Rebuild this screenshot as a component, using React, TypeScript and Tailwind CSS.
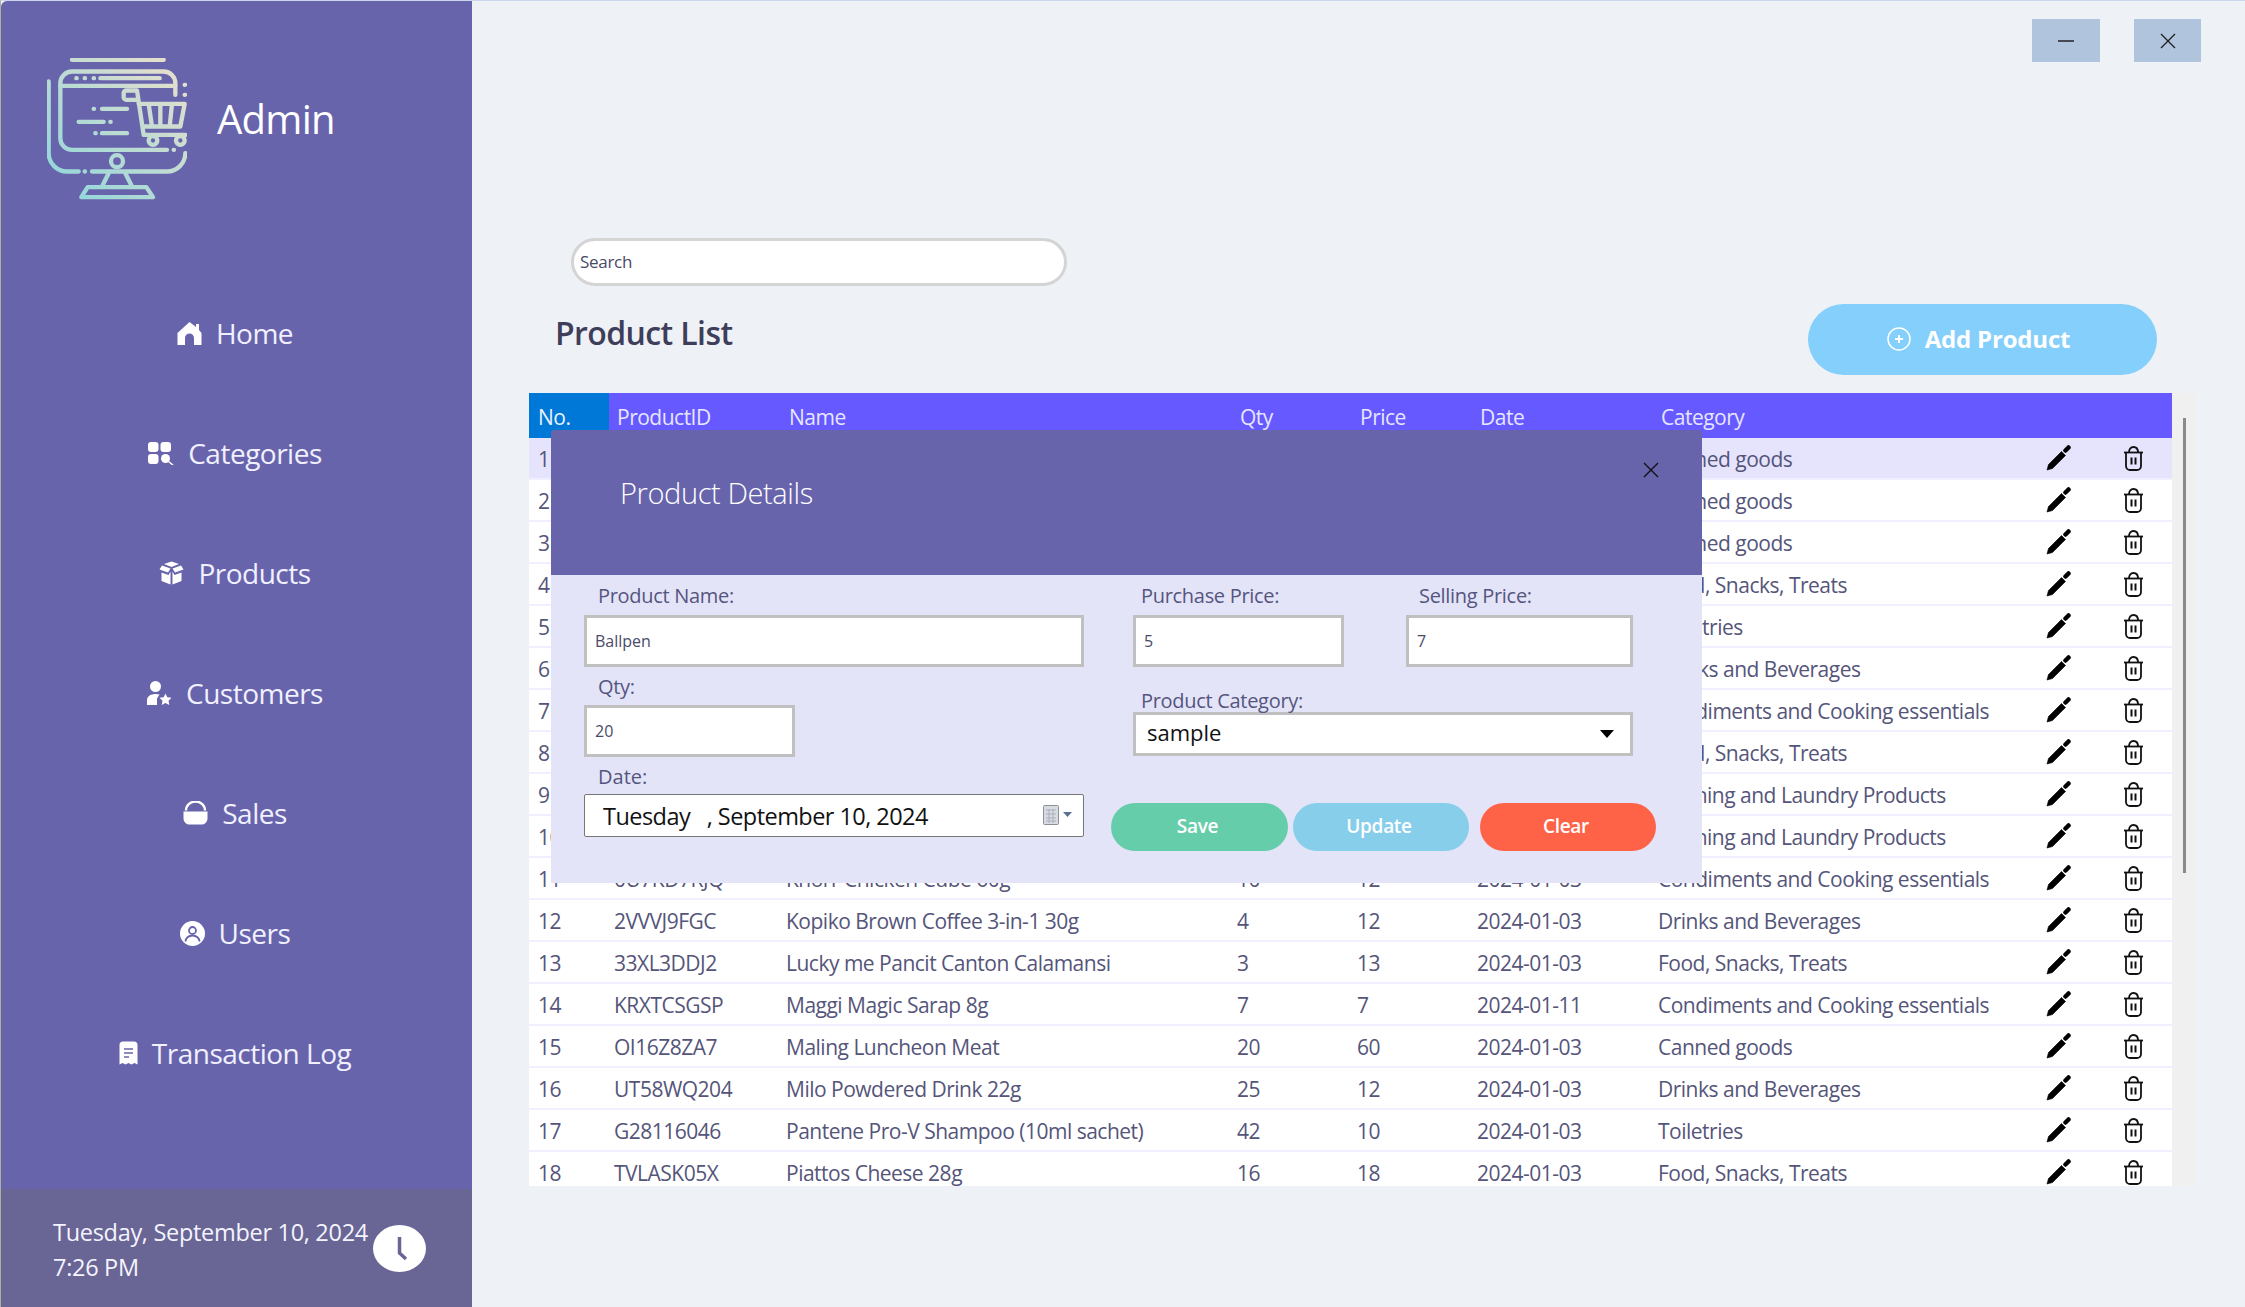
import React from "react";

const font = "font-['Open_Sans','Noto_Sans',sans-serif]";

type Row = {
  no: number;
  id?: string;
  name?: string;
  qty?: number;
  price?: number;
  date?: string;
  category: string;
};

const rows: Row[] = [
  { no: 1, category: "Canned goods" },
  { no: 2, category: "Canned goods" },
  { no: 3, category: "Canned goods" },
  { no: 4, category: "Food, Snacks, Treats" },
  { no: 5, category: "Toiletries" },
  { no: 6, category: "Drinks and Beverages" },
  { no: 7, category: "Condiments and Cooking essentials" },
  { no: 8, category: "Food, Snacks, Treats" },
  { no: 9, category: "Clothing and Laundry Products" },
  { no: 10, category: "Clothing and Laundry Products" },
  { no: 11, id: "0U7KD7RJQ", name: "Knorr Chicken Cube 60g", qty: 10, price: 12, date: "2024-01-03", category: "Condiments and Cooking essentials" },
  { no: 12, id: "2VVVJ9FGC", name: "Kopiko Brown Coffee 3-in-1 30g", qty: 4, price: 12, date: "2024-01-03", category: "Drinks and Beverages" },
  { no: 13, id: "33XL3DDJ2", name: "Lucky me Pancit Canton Calamansi", qty: 3, price: 13, date: "2024-01-03", category: "Food, Snacks, Treats" },
  { no: 14, id: "KRXTCSGSP", name: "Maggi Magic Sarap 8g", qty: 7, price: 7, date: "2024-01-11", category: "Condiments and Cooking essentials" },
  { no: 15, id: "OI16Z8ZA7", name: "Maling Luncheon Meat", qty: 20, price: 60, date: "2024-01-03", category: "Canned goods" },
  { no: 16, id: "UT58WQ204", name: "Milo Powdered Drink 22g", qty: 25, price: 12, date: "2024-01-03", category: "Drinks and Beverages" },
  { no: 17, id: "G28116046", name: "Pantene Pro-V Shampoo (10ml sachet)", qty: 42, price: 10, date: "2024-01-03", category: "Toiletries" },
  { no: 18, id: "TVLASK05X", name: "Piattos Cheese 28g", qty: 16, price: 18, date: "2024-01-03", category: "Food, Snacks, Treats" },
];

const Logo = () => (
  <svg width="140" height="142" viewBox="0 0 420 425" fill="none" stroke="url(#logoGrad)" strokeWidth="13" strokeLinecap="round" strokeLinejoin="round">
    <defs>
      <linearGradient id="logoGrad" gradientUnits="userSpaceOnUse" x1="0" y1="425" x2="420" y2="0">
        <stop offset="0" stopColor="#8AD6DC" />
        <stop offset="1" stopColor="#EDE0CB" />
      </linearGradient>
    </defs>
    <path d="M75 5H350" />
    <path d="M385 110V75a35 35 0 0 0-35-35H75a35 35 0 0 0-35 35V240a35 35 0 0 0 35 35H360" />
    <path d="M380 275h1M40 83H385" />
    <path d="M88 60h1M113 60h1M140 60h1M160 60H338" />
    <path d="M5 70V285a55 55 0 0 0 55 55H95M113 340h1M135 340H360a55 55 0 0 0 55-55" />
    <path d="M413 80h1M413 110h1" />
    <circle cx="210" cy="309" r="18" />
    <path d="M185 345L165 385M235 345L255 385M122 387H298L318 417H103Z" />
    <path d="M140 152h1M165 152H240M95 191H170M190 191h1M145 225h1M165 225H240" />
    <path d="M238 97H270L290 230H415M270 125H238a8 8 0 0 1-8-8V105a8 8 0 0 1 8-8" />
    <path d="M275 137H413L400 205H288M305 137L315 205M340 137V205M375 137L368 205" />
    <circle cx="318" cy="247" r="13" />
    <circle cx="400" cy="247" r="13" />
  </svg>
);

const HomeIcon = () => (
  <svg width="25" height="25" viewBox="0 0 25 25" fill="#fff">
    <path d="M12.500 1L19 6V3h3v6l2.500 3v12H17v-7a4.500 4.500 0 0 0-9 0v7H0.500V12Z" />
  </svg>
);

const CategoriesIcon = () => (
  <svg width="26" height="24" viewBox="0 0 26 24" fill="#fff">
    <rect x="0" y="1" width="10.500" height="10" rx="3" />
    <rect x="12.500" y="1" width="10.500" height="10" rx="3" />
    <rect x="0" y="13" width="10.500" height="10" rx="3" />
    <circle cx="17.500" cy="17.500" r="4.500" />
    <path d="M20.500 20.500L25 24" stroke="#fff" strokeWidth="1.500" />
  </svg>
);

const ProductsIcon = () => (
  <svg width="25" height="24" viewBox="0 0 25 24" fill="#fff">
    <path d="M12.500 0.500L20 3l-7.500 3L5 3Z" />
    <path d="M3 4.500l8.500 3L9 11.500 0.500 8.500Z" />
    <path d="M22 4.500l-8.500 3L16 11.500l8.500-3Z" />
    <path d="M2.500 11.500L9.500 14l2-3.500V23.500L2.500 20Z" />
    <path d="M22.500 11.500L15.500 14l-2-3.500V23.500L22.500 20Z" />
  </svg>
);

const CustomersIcon = () => (
  <svg width="25" height="24" viewBox="0 0 25 24" fill="#fff">
    <circle cx="8.500" cy="5.500" r="5.500" />
    <path d="M0 24v-4.500C0 15 4 13 9 13c1.500 0 2.500.2 3.500.5L10 17.500V24Z" />
    <path d="M18.500 12.500l1.800 3.800 4.200.5-3 2.900.8 4.300-3.800-2.100-3.800 2.100.8-4.300-3-2.900 4.200-.5Z" />
  </svg>
);

const SalesIcon = () => (
  <svg width="25" height="24" viewBox="0 0 25 24" fill="#fff">
    <path d="M0.500 10.500h24v7.500a6 6 0 0 1-6 5.500h-12a6 6 0 0 1-6-5.500Z" />
    <path d="M3 9.500a9.500 9 0 0 1 19 0" fill="none" stroke="#fff" strokeWidth="2.400" />
  </svg>
);

const UsersIcon = () => (
  <svg width="25" height="25" viewBox="0 0 25 25">
    <circle cx="12.500" cy="12.500" r="12.500" fill="#fff" />
    <circle cx="12.500" cy="9.500" r="3.500" fill="none" stroke="#6864AC" strokeWidth="1.800" />
    <path d="M5.500 20.500a7 6 0 0 1 14 0" fill="none" stroke="#6864AC" strokeWidth="1.800" />
  </svg>
);

const LogIcon = () => (
  <svg width="19" height="24" viewBox="0 0 19 24">
    <path d="M0.500 4a3.500 3.500 0 0 1 3.500-3.500h11A3.500 3.500 0 0 1 18.500 4v19.500l-3-1.500-3 1.500-3-1.500-3 1.500-3-1.500-3 1.500Z" fill="#fff" />
    <path d="M5 8h9M5 12h9M5 16h5" stroke="#6864AC" strokeWidth="1.600" />
  </svg>
);

const PencilIcon = () => (
  <svg width="25" height="26" viewBox="0 0 25 26" fill="none">
    <path d="M1 25L2.500 19.500L15.500 6.500L19.500 10.500L6.500 23.500Z" fill="#000" stroke="#000" strokeWidth="0.600" strokeLinejoin="round" />
    <path d="M19.500 5.500L22.500 2.500" stroke="#000" strokeWidth="4.500" strokeLinecap="round" />
  </svg>
);

const TrashIcon = () => (
  <svg width="21" height="25" viewBox="0 0 21 25" fill="none" stroke="#111" strokeWidth="1.800" strokeLinejoin="round">
    <path d="M1 6.500h19" />
    <path d="M6 6.500C6 3 7.500 1 10.500 1S15 3 15 6.500" />
    <path d="M3 6.500V20a4 4 0 0 0 4 4h7a4 4 0 0 0 4-4V6.500" />
    <path d="M8.500 11.500v7M12.500 11.500v7" strokeWidth="2" />
  </svg>
);

const navItems: { label: string; icon: React.ReactNode }[] = [
  { label: "Home", icon: <HomeIcon /> },
  { label: "Categories", icon: <CategoriesIcon /> },
  { label: "Products", icon: <ProductsIcon /> },
  { label: "Customers", icon: <CustomersIcon /> },
  { label: "Sales", icon: <SalesIcon /> },
  { label: "Users", icon: <UsersIcon /> },
  { label: "Transaction Log", icon: <LogIcon /> },
];

const Sidebar = () => (
  <aside className="w-[471px] h-full shrink-0 bg-[#6864AC] rounded-tl-md flex flex-col">
    <div className="h-[272px] pl-[46px] pt-[57px] flex items-start gap-[30px]">
      <Logo />
      <span className="text-[40px] leading-[50px] mt-[36px] text-white tracking-[-0.7px]">Admin</span>
    </div>
    <nav className="flex-1 flex flex-col pr-[3px]">
      {navItems.map((item) => (
        <div key={item.label} className="h-[120px] flex items-center justify-center gap-[14px] text-[28px] text-[#F0F0FF] tracking-[-0.5px]">
          {item.icon}
          <span>{item.label}</span>
        </div>
      ))}
    </nav>
    <div className="h-[118px] shrink-0 bg-[#696594] pl-[52px] pt-[4px] flex items-center">
      <div className="w-[320px] text-[23.500px] leading-[35px] font-medium text-[#F4F4FF] tracking-[-0.3px] whitespace-nowrap">
        <div>Tuesday, September 10, 2024</div>
        <div>7:26 PM</div>
      </div>
      <svg className="-mt-[4px]" width="53" height="47" viewBox="0 0 53 47">
        <ellipse cx="26.500" cy="23.500" rx="26.500" ry="23.500" fill="#fff" />
        <path d="M26.500 12V28L33 34" fill="none" stroke="#696594" strokeWidth="3.500" />
      </svg>
    </div>
  </aside>
);

const Field = ({ label, value, className, labelClass }: { label: string; value: string; className: string; labelClass: string }) => (
  <div className={className}>
    <div className={`h-[40px] text-[20px] leading-[40px] text-[#55557F] tracking-[-0.3px] whitespace-nowrap ${labelClass}`}>{label}</div>
    <div className="h-[52px] border-[3px] border-[#C0C0C0] bg-white pl-[8px] flex items-center text-[16px] text-[#4a4a68]">{value}</div>
  </div>
);

const Modal = () => (
  <div className="absolute left-[550px] top-[429px] w-[1151px] h-[453px] flex flex-col">
    <div className="h-[145px] shrink-0 bg-[#6864AC] rounded-t-[3px] relative pl-[69px] pt-[41px]">
      <span className="text-[29px] leading-[44px] font-light text-white tracking-[-0.4px]">Product Details</span>
      <svg className="absolute left-[1092px] top-[32px]" width="16" height="16" viewBox="0 0 16 16" stroke="#111" strokeWidth="1.400">
        <path d="M1 1L15 15M15 1L1 15" />
      </svg>
    </div>
    <div className="flex-1 bg-[#E4E4F8] pl-[33px] flex">
      <div className="w-[500px] flex flex-col">
        <Field label="Product Name:" value="Ballpen" className="w-[500px]" labelClass="pl-[14px] leading-[42px]" />
        <Field label="Qty:" value="20" className="w-[211px] mt-[-2px]" labelClass="pl-[14px] leading-[44px]" />
        <div className="h-[37px] pl-[14px] text-[20px] leading-[40px] text-[#55557F]">Date:</div>
        <div className="h-[43px] border border-[#777] rounded-[2px] bg-white pl-[18px] pr-[10px] flex items-center justify-between text-[23.500px] text-[#111] tracking-[-0.55px] whitespace-pre">
          <span className="pt-[2px]">{"Tuesday   , September 10, 2024"}</span>
          <svg width="30" height="22" viewBox="0 0 30 22">
            <rect x="0.500" y="0.500" width="15" height="19" rx="1" fill="#D8DCE2" stroke="#8a8f98" />
            <path d="M3 5h10M3 9h10M3 13h10M3 16h10M6 4v14M10 4v14" stroke="#A8B0BC" strokeWidth="1" />
            <path d="M20 7h9l-4.500 5Z" fill="#5B6F8F" />
          </svg>
        </div>
      </div>
      <div className="ml-[49px] w-[523px] flex flex-col">
        <div className="flex">
          <Field label="Purchase Price:" value="5" className="w-[211px] mr-[62px]" labelClass="pl-[8px] leading-[42px]" />
          <Field label="Selling Price:" value="7" className="w-[227px]" labelClass="pl-[13px] leading-[42px]" />
        </div>
        <div className="w-[500px] mt-[24px]">
          <div className="h-[21px] pl-[8px] text-[20px] leading-[19px] text-[#55557F] tracking-[-0.3px]">Product Category:</div>
          <div className="h-[44px] border-[3px] border-[#C0C0C0] bg-white pl-[11px] pr-[16px] flex items-center justify-between text-[22px] text-[#111]">
            <span className="-mt-[4px]">sample</span>
            <svg width="14" height="8" viewBox="0 0 14 8"><path d="M0 0H14L7 8Z" fill="#000" /></svg>
          </div>
        </div>
        <div className="flex mt-[47px] -ml-[22px] text-[19px] font-semibold text-white tracking-[-0.3px]">
          <div className="w-[177px] h-[48px] pr-[4px] pb-[2px] rounded-[24px] bg-[#66CDAA] flex items-center justify-center">Save</div>
          <div className="ml-[5px] w-[176px] h-[48px] pr-[4px] pb-[2px] rounded-[24px] bg-[#87CEEB] flex items-center justify-center">Update</div>
          <div className="ml-[11px] w-[176px] h-[48px] pr-[4px] pb-[2px] rounded-[24px] bg-[#FF6347] flex items-center justify-center">Clear</div>
        </div>
      </div>
    </div>
  </div>
);

const ProductTable = () => (
  <div className="flex h-[793px] mt-[18px]">
    <div className="w-[1643px] h-full flex flex-col overflow-hidden bg-white text-[21px] tracking-[-0.5px]">
      <div className="h-[45px] shrink-0 bg-[#6559FF] text-[#E6E6FF] grid grid-cols-[80px_172px_451px_120px_120px_181px_1fr] items-center pt-[4px]">
        <div className="bg-[#0078D7] h-[45px] -mt-[4px] pl-[9px] pt-[4px] flex items-center text-[#EAF2FF]">No.</div>
        <div className="pl-[8px]">ProductID</div>
        <div className="pl-[8px]">Name</div>
        <div className="pl-[8px]">Qty</div>
        <div className="pl-[8px]">Price</div>
        <div className="pl-[8px]">Date</div>
        <div className="pl-[8px]">Category</div>
      </div>
      {rows.map((r) => (
        <div
          key={r.no}
          className={
            "h-[42px] shrink-0 border-b-2 border-[#F0EEFF] text-[#55557A] grid grid-cols-[85px_172px_451px_120px_120px_181px_370px_60px_84px] items-center " +
            (r.no === 1 ? "bg-[#E6E4FD]" : "bg-white")
          }
        >
          <div className="pl-[9px] pt-[3px]">{r.no}</div>
          <div className="pt-[3px]">{r.id}</div>
          <div className="pt-[3px] whitespace-nowrap">{r.name}</div>
          <div className="pt-[3px]">{r.qty}</div>
          <div className="pt-[3px]">{r.price}</div>
          <div className="pt-[3px]">{r.date}</div>
          <div className="pt-[3px] whitespace-nowrap">{r.category}</div>
          <div className="flex justify-center"><PencilIcon /></div>
          <div className="pl-[35px]"><TrashIcon /></div>
        </div>
      ))}
    </div>
    <div className="w-[24px] h-full bg-[#F0F0F0] pt-[25px] pl-[11px]">
      <div className="w-[3px] h-[455px] bg-[#8A8A8A]" />
    </div>
  </div>
);

export default function App() {
  return (
    <div className={`${font} relative w-[2245px] h-[1307px] overflow-hidden bg-[#EEF2F7] border-t border-l border-t-[#CBD5EE] border-l-[#B0AE9E] flex`}>
      <Sidebar />
      <main className="flex-1 relative pl-[57px]">
        <div className="h-[61px] pt-[18px] pr-[44px] flex justify-end gap-[34px]">
          <div className="w-[68px] h-[43px] bg-[#B0C4DE] flex items-center justify-center">
            <svg width="16" height="2" viewBox="0 0 16 2"><path d="M0 1H16" stroke="#222" strokeWidth="1.500" /></svg>
          </div>
          <div className="w-[67px] h-[43px] bg-[#B0C4DE] flex items-center justify-center">
            <svg width="16" height="16" viewBox="0 0 16 16" stroke="#222" strokeWidth="1.400"><path d="M1 1L15 15M15 1L1 15" /></svg>
          </div>
        </div>
        <div className="ml-[42px] mt-[176px] w-[496px] h-[48px] rounded-[24px] bg-white border-[3px] border-[#D4D4D4] pl-[6px] flex items-center text-[17px] text-[#4a4a68] tracking-[-0.3px]">
          Search
        </div>
        <div className="flex items-start justify-between pr-[88px] mt-[18px]">
          <h1 className="ml-[26px] mt-[7px] text-[32px] leading-[44px] font-semibold text-[#3E3E5A] tracking-[-0.6px]">Product List</h1>
          <div className="w-[349px] h-[71px] pr-[8px] pb-[2px] rounded-[36px] bg-[#84CFFC] flex items-center justify-center gap-[14px] text-[24px] font-bold text-white tracking-[-0.2px]">
            <svg width="24" height="24" viewBox="0 0 24 24" fill="none" stroke="#fff" strokeWidth="1.500">
              <circle cx="12" cy="12" r="11" />
              <path d="M12 8v8M8 12h8" strokeWidth="2" />
            </svg>
            <span>Add Product</span>
          </div>
        </div>
        <ProductTable />
      </main>
      <Modal />
    </div>
  );
}
